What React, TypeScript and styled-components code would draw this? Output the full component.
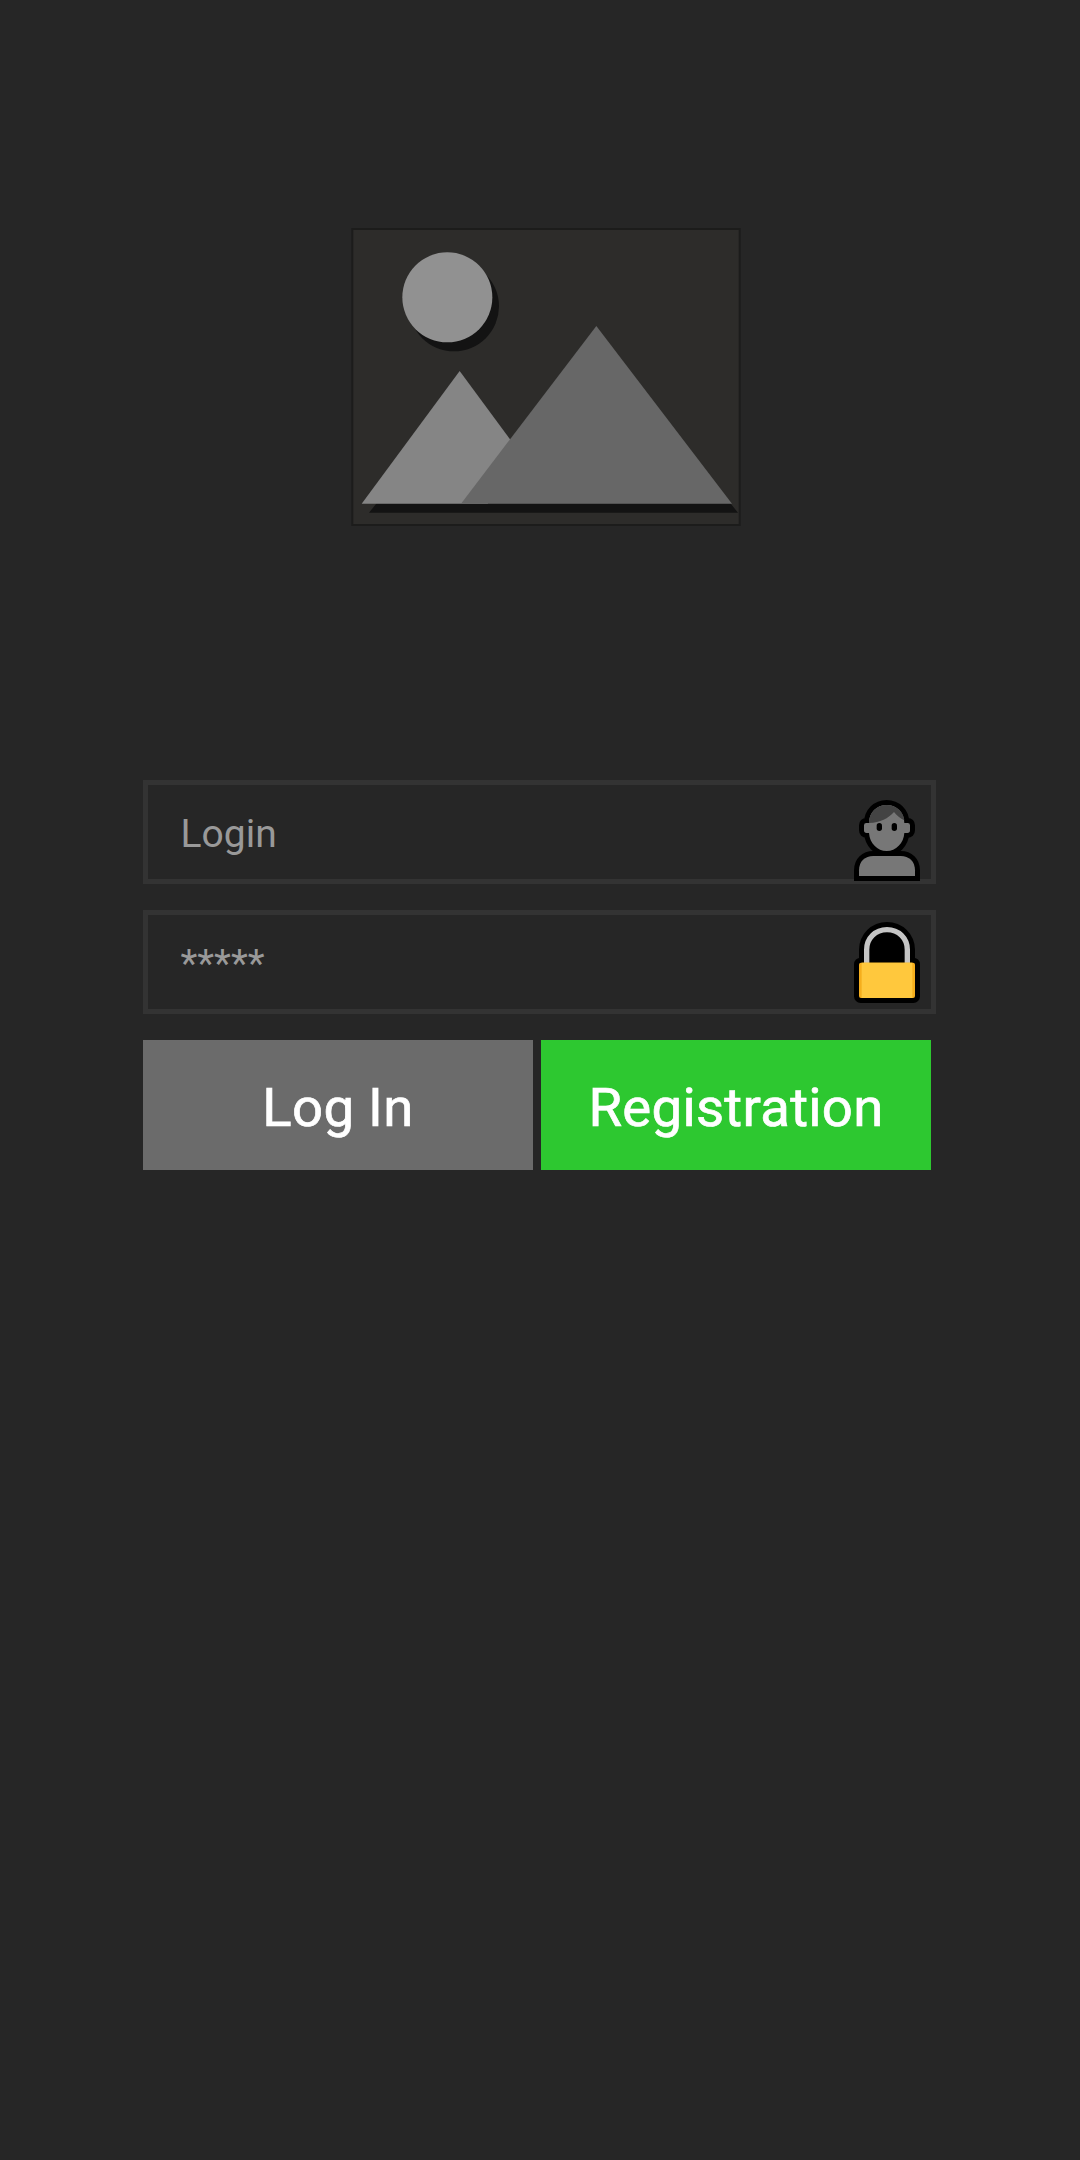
import React from "react";
import styled, { createGlobalStyle } from "styled-components";

const GlobalStyle = createGlobalStyle`
  *, *::before, *::after { box-sizing: border-box; }
  html, body { margin: 0; background: #262626; }
  body { font-family: Roboto, "Liberation Sans", sans-serif; }
`;

const Screen = styled.main`
  display: flex;
  flex-direction: column;
  width: 1080px;
  min-height: 2160px;
  padding: 228px 144px 0 143px;
  background: #262626;
`;

const Banner = styled.figure`
  display: flex;
  margin: 0 0 253px 208px;
  width: 391px;
  height: 299px;

  svg { display: block; }
`;

const Form = styled.form`
  display: flex;
  flex-direction: column;
  gap: 26px;
`;

const Field = styled.label`
  display: flex;
  align-items: flex-start;
  height: 104px;
  padding: 0 11px 0 32.5px;
  border: 5px solid #333333;
`;

const Input = styled.input`
  flex: 1;
  min-width: 0;
  height: 94px;
  padding: 4px 0 0;
  border: 0;
  outline: 0;
  background: transparent;
  color: #999999;
  font: 400 39px Roboto, "Liberation Sans", sans-serif;

  &::placeholder { color: #999999; opacity: 1; }
`;

const FieldIcon = styled.svg<{ $top: number }>`
  flex: none;
  width: 66px;
  height: 81px;
  margin-top: ${(p) => p.$top}px;
`;

const Actions = styled.div`
  display: flex;
  gap: 8px;
`;

const Button = styled.button<{ $tone: string }>`
  width: 390px;
  height: 130px;
  padding: 4px 0 0;
  border: 0;
  background: ${(p) => p.$tone};
  color: #ffffff;
  font: 400 54.5px Roboto, "Liberation Sans", sans-serif;
  letter-spacing: 0.3px;
  -webkit-text-stroke: 0.7px #ffffff;
`;

function Landscape() {
  return (
    <svg width="391" height="299" viewBox="0 0 1173 897" aria-hidden="true">
      <rect x="4" y="3" width="1162" height="888" fill="#2d2c2a" stroke="#1c1c1b" strokeWidth="6" />
      <circle cx="309" cy="235" r="135" fill="#131313" />
      <path d="M54 854 L77 826 H1138 L1161 854 Z" fill="#131313" />
      <circle cx="289" cy="208" r="135" fill="#919191" />
      <path d="M32 827 L326 429 L500 665 L410 827 Z" fill="#858585" />
      <path d="M330 827 L736 294 L1143 827 Z" fill="#676767" />
    </svg>
  );
}

const FACE = "M98 15 C128 15 151 38 151 69 H161 Q168 69 168 76 V91 Q168 99 160 99 H151 C149 130 126 153 98 153 C70 153 47 130 45 99 H38 Q30 99 30 91 V76 Q30 69 37 69 H45 C45 38 68 15 98 15 Z";
const SHOULDERS = "M15 228 V211 C15 184 33 168 58 168 H140 C165 168 183 184 183 211 V228 Z";

function UserIcon() {
  return (
    <FieldIcon $top={15} viewBox="0 0 198 243" aria-hidden="true">
      <g fill="#777777" stroke="#000000" strokeWidth="30">
        <path d={FACE} />
        <path d={SHOULDERS} />
      </g>
      <path d={FACE} fill="#777777" />
      <path d={SHOULDERS} fill="#777777" />
      <path d="M45 69 C45 38 68 15 98 15 C128 15 149 36 151 61 C139 55 128 46 120 36 C103 55 79 68 45 69 Z" fill="#434343" />
      <rect x="68" y="69" width="16" height="24" rx="8" />
      <rect x="113" y="69" width="16" height="24" rx="8" />
    </FieldIcon>
  );
}

function LockIcon() {
  return (
    <FieldIcon $top={7} viewBox="0 0 198 243" aria-hidden="true">
      <path d="M15 130 V83 A84 83 0 0 1 183 83 V130 Z" fill="#000000" />
      <rect x="0" y="107" width="198" height="136" rx="20" fill="#000000" />
      <path d="M38 125 V83 C38 49 64 23 99 23 C134 23 160 49 160 83 V125" fill="none" stroke="#c5c5c5" strokeWidth="16" />
      <rect x="15" y="122" width="168" height="106" rx="6" fill="#f5ae1d" />
      <rect x="23" y="122" width="152" height="106" fill="#ffc83d" />
    </FieldIcon>
  );
}

export default function App() {
  return (
    <>
      <GlobalStyle />
      <Screen>
        <Banner>
          <Landscape />
        </Banner>
        <Form onSubmit={(e: React.FormEvent) => e.preventDefault()}>
          <Field>
            <Input type="text" placeholder="Login" aria-label="Login" />
            <UserIcon />
          </Field>
          <Field>
            <Input type="password" placeholder="*****" aria-label="Password" />
            <LockIcon />
          </Field>
          <Actions>
            <Button type="submit" $tone="#6b6b6b">Log In</Button>
            <Button type="button" $tone="#2dc830">Registration</Button>
          </Actions>
        </Form>
      </Screen>
    </>
  );
}
